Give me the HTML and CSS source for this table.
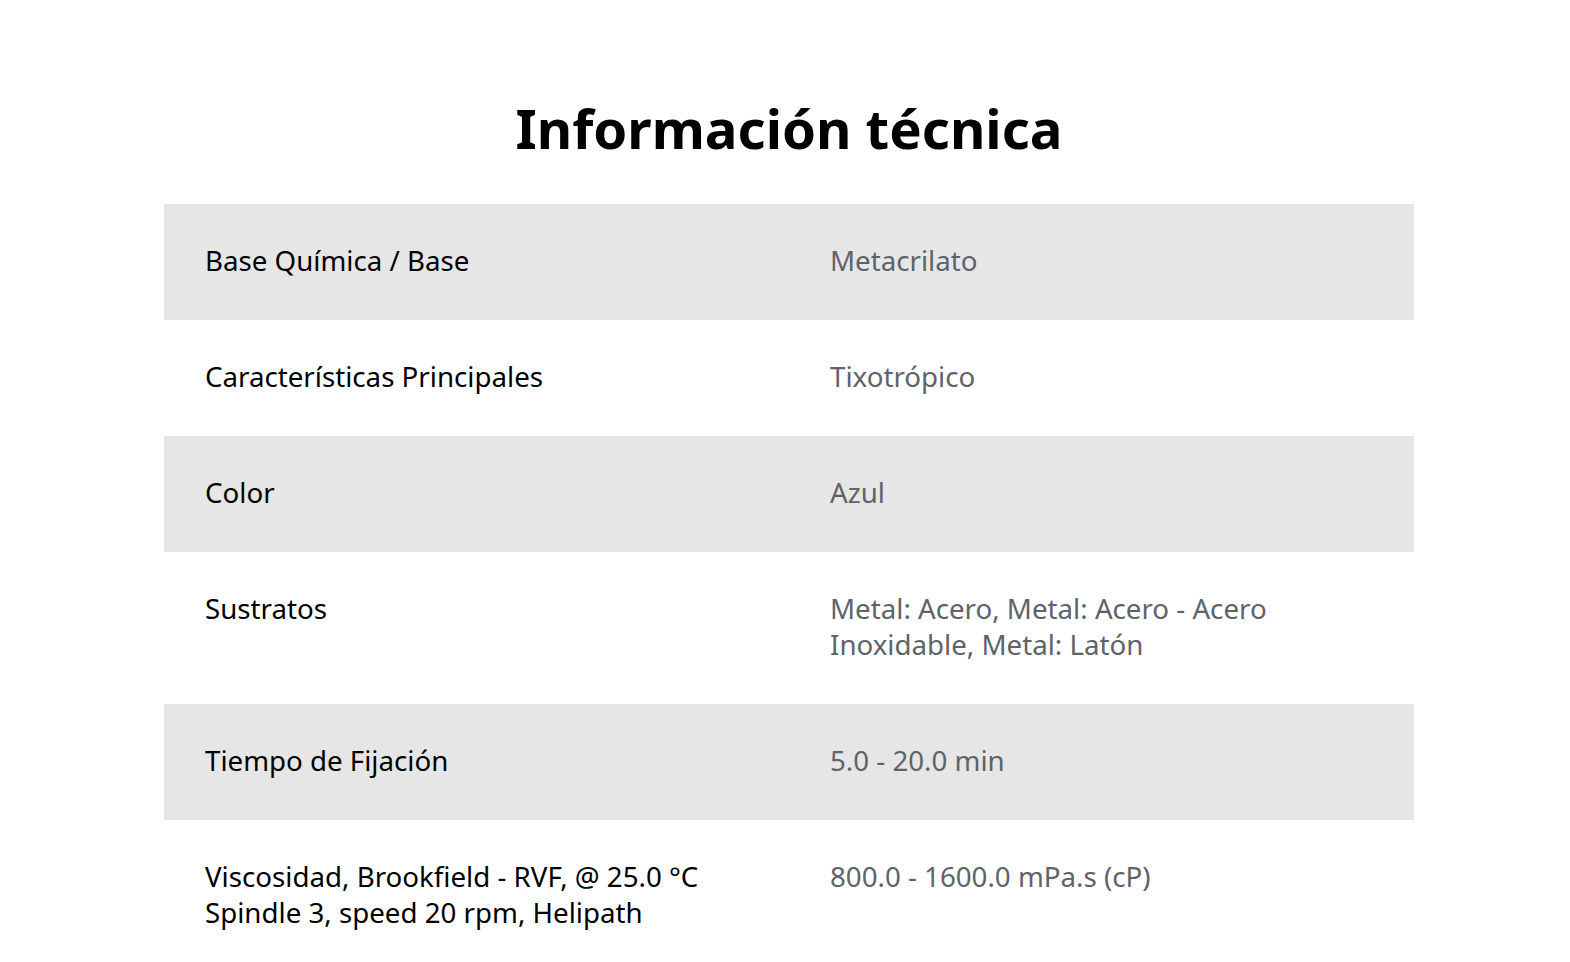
FILE: index.html
```html
<!DOCTYPE html>
<html lang="es">
<head>
<meta charset="utf-8">
<title>Información técnica</title>
<link rel="stylesheet" href="styles.css">
</head>
<body>
<main class="page">
  <h1 class="title">Información técnica</h1>
  <table class="tech">
    <tbody>
      <tr class="shade"><td class="label">Base Química / Base</td><td class="value">Metacrilato</td></tr>
      <tr><td class="label">Características Principales</td><td class="value">Tixotrópico</td></tr>
      <tr class="shade"><td class="label">Color</td><td class="value">Azul</td></tr>
      <tr><td class="label">Sustratos</td><td class="value">Metal: Acero, Metal: Acero - Acero<br>Inoxidable, Metal: Latón</td></tr>
      <tr class="shade"><td class="label">Tiempo de Fijación</td><td class="value">5.0 - 20.0 min</td></tr>
      <tr><td class="label">Viscosidad, Brookfield - RVF, @ 25.0 °C<br>Spindle 3, speed 20 rpm, Helipath</td><td class="value">800.0 - 1600.0 mPa.s (cP)</td></tr>
    </tbody>
  </table>
</main>
</body>
</html>
```

FILE: styles.css
```css
html, body {
  margin: 0;
  padding: 0;
  background: #ffffff;
}
body {
  font-family: "Noto Sans", "Open Sans", sans-serif;
  color: #000;
}
.page {
  width: 1250px;
  margin: 0 auto;
  padding: 92px 0 0 8px;
}
.title {
  margin: 0 0 40px;
  text-align: center;
  font-size: 54.5px;
  line-height: 72px;
  font-weight: 700;
  color: #000;
}
.tech {
  width: 100%;
  border-collapse: collapse;
  table-layout: fixed;
}
.tech td {
  width: 50%;
  padding: 38px 40px 42px 41px;
  vertical-align: top;
  font-size: 27.7px;
  line-height: 36px;
}
.shade {
  background: #e6e6e6;
}
.label {
  color: #000;
}
.value {
  color: #5e6369;
}
```
